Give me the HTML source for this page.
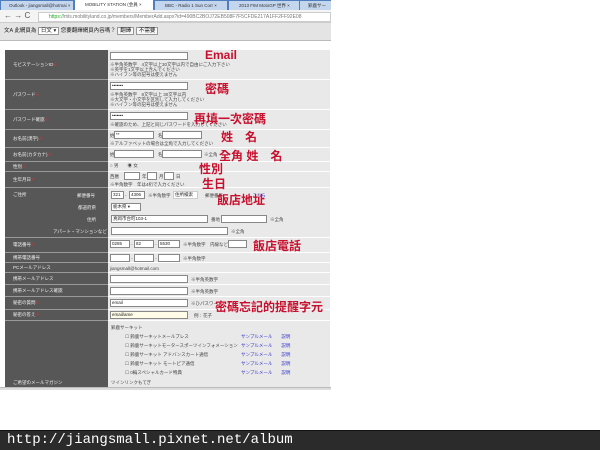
<!DOCTYPE html>
<html><head><meta charset="utf-8"><style>
*{margin:0;padding:0;box-sizing:border-box}
body{width:600px;height:450px;background:#fff;position:relative;overflow:hidden;font-family:"Liberation Sans","Noto Sans CJK JP",sans-serif}
.a{position:absolute}
.l{position:absolute;left:5px;width:103px;background:#575757;border-bottom:1px solid #999;color:#eee;font-size:4.5px;padding-left:8px;display:flex;align-items:center}
.r{position:absolute;left:108px;width:222px;background:#e9e9e9;border-bottom:1px solid #fff}
.in{position:absolute;background:#fff;border:1px solid #888;height:8px;font-size:4.5px;line-height:6px;padding-left:1px;color:#222}
.t{position:absolute;font-size:4.5px;color:#444;white-space:nowrap;line-height:5px}
.red{position:absolute;color:#c8102e;font-weight:bold;font-size:12px;white-space:nowrap;line-height:14px;font-family:"Liberation Sans","Noto Sans CJK TC",sans-serif}
.lnk{color:#33c}
</style></head><body>
<div class="a" style="left:0;top:0;width:331px;height:10px;background:#4f7fbf"></div>
<div class="a" style="left:1px;top:1px;width:72px;height:9px;background:#c4d6ee;font-size:4.5px;color:#333;padding-left:8px;line-height:9px">Outlook - jiangsmall@hotmai ×</div>
<div class="a" style="left:75px;top:0;width:78px;height:10px;background:#fff;font-size:4.5px;color:#333;padding-left:10px;line-height:10px">MOBILITY STATION (会員 ×</div>
<div class="a" style="left:155px;top:1px;width:72px;height:9px;background:#c4d6ee;font-size:4.5px;color:#333;padding-left:10px;line-height:9px">BBC - Radio 1 Sun Corr ×</div>
<div class="a" style="left:229px;top:1px;width:70px;height:9px;background:#c4d6ee;font-size:4.5px;color:#333;padding-left:10px;line-height:9px">2013 FIM MotoGP 世界 ×</div>
<div class="a" style="left:300px;top:1px;width:31px;height:9px;background:#c4d6ee;font-size:4.5px;color:#333;padding-left:8px;line-height:9px">鈴鹿サー</div>
<div class="a" style="left:0;top:10px;width:331px;height:13px;background:#f4f4f4;border-bottom:1px solid #ccc"></div>
<div class="a" style="left:4px;top:11px;font-size:8px;color:#555">← → C</div>
<div class="a" style="left:38px;top:12px;width:293px;height:10px;background:#fff;border:1px solid #ccc;font-size:5px;color:#777;line-height:8px;padding-left:10px;white-space:nowrap;overflow:hidden"><span style="color:#2a2">https://</span>mls.mobilityland.co.jp/members/MemberAdd.aspx?id=490BC2BOJ72EB508F7F5CFDE217A1FF2FF92E08</div>
<div class="a" style="left:0;top:23px;width:331px;height:18px;background:#e4e4e4;border-bottom:1px solid #bbb"></div>
<div class="t" style="left:4px;top:29px;font-size:5.5px;color:#222">文A 此網頁為 <span style="border:1px solid #999;background:#fff;padding:0 2px">日文 ▾</span> 您要翻譯網頁內容嗎？ <span style="border:1px solid #999;background:#f8f8f8;padding:0 2px">翻譯</span> <span style="border:1px solid #999;background:#f8f8f8;padding:0 2px">不需要</span></div>
<div class="l" style="top:50px;height:30px">モビステーションID <span style="color:#d33">※</span></div><div class="r" style="top:50px;height:30px"></div>
<div class="l" style="top:80px;height:30px">パスワード <span style="color:#d33">※</span></div><div class="r" style="top:80px;height:30px"></div>
<div class="l" style="top:110px;height:20px">パスワード確認 <span style="color:#d33">※</span></div><div class="r" style="top:110px;height:20px"></div>
<div class="l" style="top:130px;height:18px">お名前(漢字) <span style="color:#d33">※</span></div><div class="r" style="top:130px;height:18px"></div>
<div class="l" style="top:148px;height:14px">お名前(カタカナ) <span style="color:#d33">※</span></div><div class="r" style="top:148px;height:14px"></div>
<div class="l" style="top:162px;height:10px">性別 <span style="color:#d33">※</span></div><div class="r" style="top:162px;height:10px"></div>
<div class="l" style="top:172px;height:16px">生年月日 <span style="color:#d33">※</span></div><div class="r" style="top:172px;height:16px"></div>
<div class="l" style="top:188px;height:50px;align-items:flex-start;padding-top:4px">ご住所</div><div class="r" style="top:188px;height:50px"></div>
<div class="t" style="left:77px;top:193px;color:#eee">郵便番号</div>
<div class="t" style="left:78px;top:205px;color:#eee">都道府県</div>
<div class="t" style="left:87px;top:217px;color:#eee">住所</div>
<div class="t" style="left:53px;top:229px;color:#eee">アパート・マンションなど</div>
<div class="l" style="top:238px;height:15px">電話番号 <span style="color:#d33">※</span></div><div class="r" style="top:238px;height:15px"></div>
<div class="l" style="top:253px;height:10px">携帯電話番号</div><div class="r" style="top:253px;height:10px"></div>
<div class="l" style="top:263px;height:10px">PCメールアドレス</div><div class="r" style="top:263px;height:10px"></div>
<div class="l" style="top:273px;height:12px">携帯メールアドレス</div><div class="r" style="top:273px;height:12px"></div>
<div class="l" style="top:285px;height:12px">携帯メールアドレス確認</div><div class="r" style="top:285px;height:12px"></div>
<div class="l" style="top:297px;height:13px">秘密の質問 <span style="color:#d33">※</span></div><div class="r" style="top:297px;height:13px"></div>
<div class="l" style="top:310px;height:11px">秘密の答え <span style="color:#d33">※</span></div><div class="r" style="top:310px;height:11px"></div>
<div class="l" style="top:321px;height:67px;align-items:flex-end;padding-bottom:1px">ご希望のメールマガジン</div><div class="r" style="top:321px;height:67px"></div>
<div class="a" style="left:0;top:387px;width:331px;height:3px;background:#ddd;border-top:1px solid #bbb"></div>
<div class="in" style="left:110px;top:52px;width:78px"></div>
<div class="t" style="left:110px;top:62px">※半角英数字　4文字以上30文字以内で自由にご入力下さい<br>※英字を1文字以上含んでください<br>※ハイフン等の記号は使えません</div>
<div class="in" style="left:110px;top:82px;width:78px">•••••••</div>
<div class="t" style="left:110px;top:92px">※半角英数字　8文字以上 30文字以内<br>※大文字・小文字を区別して入力してください<br>※ハイフン等の記号は使えません</div>
<div class="in" style="left:110px;top:112px;width:78px">•••••••</div>
<div class="t" style="left:110px;top:122px">※確認のため、上記と同じパスワードを入力してください</div>
<div class="t" style="left:110px;top:133px">姓</div><div class="in" style="left:114px;top:131px;width:40px">**</div>
<div class="t" style="left:158px;top:133px">名</div><div class="in" style="left:162px;top:131px;width:40px"></div>
<div class="t" style="left:110px;top:141px">※アルファベットの場合は全角で入力してください</div>
<div class="t" style="left:110px;top:152px">姓</div><div class="in" style="left:114px;top:150px;width:40px"></div>
<div class="t" style="left:158px;top:152px">名</div><div class="in" style="left:162px;top:150px;width:40px"></div>
<div class="t" style="left:204px;top:152px">※全角</div>
<div class="t" style="left:110px;top:163px">○ 男　　◉ 女</div>
<div class="t" style="left:110px;top:174px">西暦</div><div class="in" style="left:124px;top:172px;width:16px"></div>
<div class="t" style="left:142px;top:174px">年</div><div class="in" style="left:147px;top:172px;width:10px"></div>
<div class="t" style="left:159px;top:174px">月</div><div class="in" style="left:164px;top:172px;width:10px"></div>
<div class="t" style="left:176px;top:174px">日</div>
<div class="t" style="left:110px;top:182px">※半角数字　年は4桁で入力ください</div>
<div class="in" style="left:111px;top:191px;width:13px">321</div><div class="t" style="left:125px;top:193px">-</div>
<div class="in" style="left:129px;top:191px;width:16px">4306</div>
<div class="t" style="left:148px;top:193px">※半角数字</div>
<div class="in" style="left:173px;top:191px;width:25px;border-color:#ccc">住所検索</div>
<div class="t" style="left:205px;top:193px">郵便番号 <span class="lnk" style="margin-left:28px">こちら</span></div>
<div class="in" style="left:111px;top:203px;width:30px">栃木県 ▾</div>
<div class="in" style="left:111px;top:215px;width:97px">真岡市台町103-1</div>
<div class="t" style="left:211px;top:217px">番地</div><div class="in" style="left:221px;top:215px;width:46px"></div>
<div class="t" style="left:270px;top:217px">※全角</div>
<div class="in" style="left:111px;top:227px;width:117px"></div><div class="t" style="left:231px;top:229px">※全角</div>
<div class="in" style="left:110px;top:240px;width:20px">0285</div><div class="t" style="left:131px;top:242px">-</div>
<div class="in" style="left:134px;top:240px;width:20px">82</div><div class="t" style="left:155px;top:242px">-</div>
<div class="in" style="left:158px;top:240px;width:22px">5530</div>
<div class="t" style="left:183px;top:242px">※半角数字　内線など</div><div class="in" style="left:228px;top:240px;width:19px"></div>
<div class="in" style="left:110px;top:254px;width:20px"></div><div class="t" style="left:131px;top:256px">-</div>
<div class="in" style="left:134px;top:254px;width:20px"></div><div class="t" style="left:155px;top:256px">-</div>
<div class="in" style="left:158px;top:254px;width:22px"></div><div class="t" style="left:183px;top:256px">※半角数字</div>
<div class="t" style="left:110px;top:266px">jiangsmall@hotmail.com</div>
<div class="in" style="left:110px;top:275px;width:78px"></div><div class="t" style="left:191px;top:277px">※半角英数字</div>
<div class="in" style="left:110px;top:287px;width:78px"></div><div class="t" style="left:191px;top:289px">※半角英数字</div>
<div class="in" style="left:110px;top:299px;width:78px">email</div><div class="t" style="left:191px;top:301px">※ひパスワー</div>
<div class="in" style="left:110px;top:311px;width:78px;background:#fffde8">email/ame</div><div class="t" style="left:194px;top:313px">例：花子</div>
<div class="t" style="left:111px;top:325px">鈴鹿サーキット</div>
<div class="t" style="left:125px;top:334px">☐ 鈴鹿サーキットメールプレス</div>
<div class="t" style="left:125px;top:343px">☐ 鈴鹿サーキットモータースポーツインフォメーション</div>
<div class="t" style="left:125px;top:352px">☐ 鈴鹿サーキット アドバンスカート通信</div>
<div class="t" style="left:125px;top:361px">☐ 鈴鹿サーキット モートピア通信</div>
<div class="t" style="left:125px;top:370px">☐ 0輪スペシャルカード特典</div>
<div class="t lnk" style="left:241px;top:334px">サンプルメール　　<span>説明</span></div>
<div class="t lnk" style="left:241px;top:343px">サンプルメール　　<span>説明</span></div>
<div class="t lnk" style="left:241px;top:352px">サンプルメール　　<span>説明</span></div>
<div class="t lnk" style="left:241px;top:361px">サンプルメール　　<span>説明</span></div>
<div class="t lnk" style="left:241px;top:370px">サンプルメール　　<span>説明</span></div>
<div class="t" style="left:111px;top:380px">ツインリンクもてぎ</div>
<div class="red" style="left:205px;top:48px">Email</div>
<div class="red" style="left:205px;top:82px">密碼</div>
<div class="red" style="left:194px;top:112px">再填一次密碼</div>
<div class="red" style="left:221px;top:130px">姓　名</div>
<div class="red" style="left:219px;top:149px">全角 姓　名</div>
<div class="red" style="left:199px;top:162px">性別</div>
<div class="red" style="left:202px;top:177px">生日</div>
<div class="red" style="left:217px;top:193px">飯店地址</div>
<div class="red" style="left:253px;top:239px">飯店電話</div>
<div class="red" style="left:215px;top:300px">密碼忘記的提醒字元</div>
<div class="a" style="left:0;top:430px;width:600px;height:20px;background:#2b2b2b;border-top:1px solid #111"></div>
<div class="a" style="left:7px;top:432px;font-family:'Liberation Mono',monospace;font-size:14px;color:#fff;white-space:nowrap;line-height:16px">http://jiangsmall.pixnet.net/album</div>
</body></html>
